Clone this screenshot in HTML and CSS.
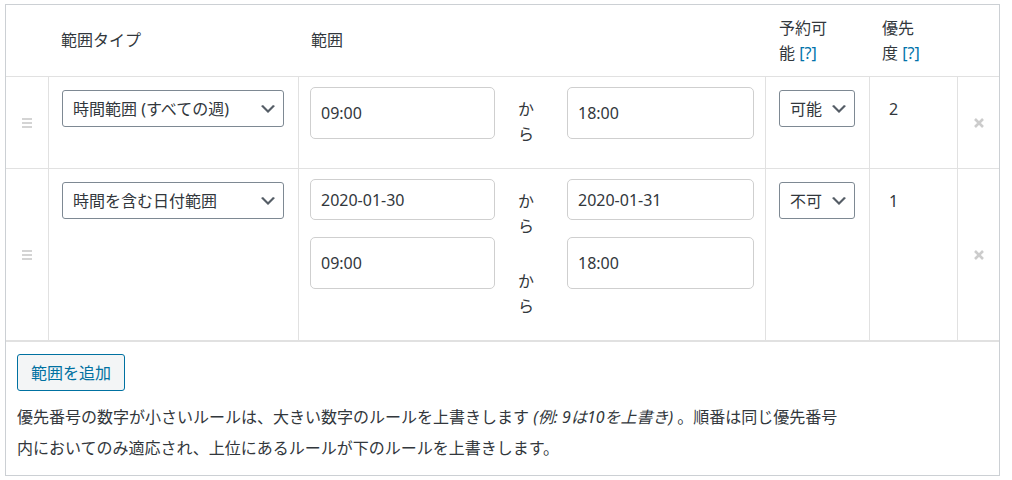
FILE: index.html
```html
<!DOCTYPE html>
<html lang="ja">
<head>
<meta charset="utf-8">
<title>範囲</title>
<link rel="stylesheet" href="styles.css">
</head>
<body>
<div class="box">
  <div class="grid">
    <div class="th"></div>
    <div class="th">範囲タイプ</div>
    <div class="th">範囲</div>
    <div class="th"><span class="wrap56">予約可能 <a class="help">[?]</a></span></div>
    <div class="th"><span class="wrap40">優先度 <a class="help">[?]</a></span></div>
    <div class="th"></div>

    <div class="td handle-cell"><svg class="handle" width="10" height="10" viewBox="0 0 10 10"><rect x="0" y="0" width="10" height="2"/><rect x="0" y="4" width="10" height="2"/><rect x="0" y="8" width="10" height="2"/></svg></div>
    <div class="td type-cell">
      <div class="select type-select"><span>時間範囲 (すべての週)</span><svg width="20" height="20" viewBox="0 0 20 20"><path d="M5 6l5 5 5-5 2 1-7 7-7-7 2-1z"/></svg></div>
    </div>
    <div class="td range">
      <div class="col-in"><input class="inp tall" type="text" value="09:00"></div>
      <div class="col-kara"><span class="kara">から</span></div>
      <div class="col-in"><input class="inp tall wide" type="text" value="18:00"></div>
    </div>
    <div class="td book-cell">
      <div class="select book-select"><span>可能</span><svg width="20" height="20" viewBox="0 0 20 20"><path d="M5 6l5 5 5-5 2 1-7 7-7-7 2-1z"/></svg></div>
    </div>
    <div class="td prio">2</div>
    <div class="td remove-cell last"><svg class="remove" width="10" height="10" viewBox="0 0 10 10"><path d="M1 1L9 9M9 1L1 9"/></svg></div>

    <div class="td handle-cell bottom"><svg class="handle" width="10" height="10" viewBox="0 0 10 10"><rect x="0" y="0" width="10" height="2"/><rect x="0" y="4" width="10" height="2"/><rect x="0" y="8" width="10" height="2"/></svg></div>
    <div class="td type-cell bottom">
      <div class="select type-select"><span>時間を含む日付範囲</span><svg width="20" height="20" viewBox="0 0 20 20"><path d="M5 6l5 5 5-5 2 1-7 7-7-7 2-1z"/></svg></div>
    </div>
    <div class="td range bottom">
      <div class="col-in">
        <input class="inp short" type="text" value="2020-01-30">
        <input class="inp tall" type="text" value="09:00">
      </div>
      <div class="col-kara">
        <span class="kara">から</span>
        <span class="kara">から</span>
      </div>
      <div class="col-in">
        <input class="inp short wide" type="text" value="2020-01-31">
        <input class="inp tall wide" type="text" value="18:00">
      </div>
    </div>
    <div class="td book-cell bottom">
      <div class="select book-select"><span>不可</span><svg width="20" height="20" viewBox="0 0 20 20"><path d="M5 6l5 5 5-5 2 1-7 7-7-7 2-1z"/></svg></div>
    </div>
    <div class="td prio bottom">1</div>
    <div class="td remove-cell last bottom"><svg class="remove" width="10" height="10" viewBox="0 0 10 10"><path d="M1 1L9 9M9 1L1 9"/></svg></div>
  </div>

  <div class="foot">
    <button class="btn" type="button">範囲を追加</button>
    <p class="note">優先番号の数字が小さいルールは、大きい数字のルールを上書きします <em>(例: 9は10を上書き)</em> 。順番は同じ優先番号内においてのみ適応され、上位にあるルールが下のルールを上書きします。</p>
  </div>
</div>
</body>
</html>
```

FILE: styles.css
```css
* {
  box-sizing: border-box;
}

html, body {
  margin: 0;
  padding: 0;
  background: #ffffff;
}

body {
  font-family: "Noto Sans", "Noto Sans CJK JP", sans-serif;
  font-size: 16px;
  color: #32373c;
}

.box {
  margin: 4px 0 0 5px;
  width: 995px;
  border: 1px solid #ccd0d4;
  background: #ffffff;
}

.grid {
  display: grid;
  grid-template-columns: 43px 250px 467px 104px 88px 41px;
  grid-template-rows: 71px auto auto;
}

.th {
  display: flex;
  align-items: center;
  padding: 0 12px;
  line-height: 25px;
  font-weight: 400;
}

.th:nth-child(4) {
  padding-left: 13px;
}

.wrap56 {
  display: block;
  width: 56px;
}

.wrap40 {
  display: block;
  width: 40px;
}

.help {
  color: #0073aa;
  text-decoration: none;
}

.td {
  border-top: 1px solid #e1e1e1;
  border-right: 1px solid #e1e1e1;
}

.td.last {
  border-right: none;
}

.td.bottom {
  border-bottom: 1px solid #e1e1e1;
}

.handle-cell,
.remove-cell {
  display: flex;
  align-items: center;
  justify-content: center;
}

.handle rect {
  fill: #d4d4d4;
}

.remove path {
  stroke: #cccccc;
  stroke-width: 2.6;
  fill: none;
}

.type-cell {
  padding: 13px 0 0 13px;
}

.book-cell {
  padding: 13px 0 0 13px;
}

.select {
  display: flex;
  align-items: center;
  justify-content: space-between;
  height: 37px;
  border: 1px solid #7e8993;
  border-radius: 3px;
  padding: 0 5px 0 10px;
  background: #ffffff;
  color: #32373c;
  line-height: 24px;
  white-space: nowrap;
}

.select svg {
  flex: none;
  fill: #555d66;
}

.type-select {
  width: 222px;
}

.book-select {
  width: 76px;
}

.range {
  display: grid;
  grid-template-columns: 185px 72px 187px;
  align-items: start;
  padding-left: 11px;
}

.col-in {
  display: flex;
  flex-direction: column;
  gap: 17px;
  padding-top: 10px;
}

.col-kara {
  display: flex;
  flex-direction: column;
  gap: 30px;
  padding: 20px 0 21px 23px;
}

.kara {
  display: block;
  width: 16px;
  line-height: 25px;
}

.inp {
  display: block;
  width: 185px;
  border: 1px solid #cfcfcf;
  border-radius: 5px;
  padding: 0 10px;
  font-family: "Noto Sans", "Noto Sans CJK JP", sans-serif;
  font-size: 16px;
  color: #32373c;
  background: #ffffff;
  outline: none;
}

.inp.wide {
  width: 187px;
}

.inp.tall {
  height: 52px;
}

.inp.short {
  height: 41px;
}

.prio {
  padding: 20px 0 0 19px;
  line-height: 25px;
}

.foot {
  border-top: 1px solid #e1e1e1;
  padding: 12px 11px 11px 11px;
}

.btn {
  display: block;
  height: 37px;
  padding: 0 13px;
  border: 1px solid #0071a1;
  border-radius: 3px;
  background: #f3f5f6;
  color: #0071a1;
  font-family: "Noto Sans", "Noto Sans CJK JP", sans-serif;
  font-size: 16px;
  line-height: 24px;
  cursor: pointer;
}

.note {
  margin: 11px 0 0 0;
  max-width: 836px;
  line-height: 31px;
}

.note em {
  font-style: italic;
}
```
